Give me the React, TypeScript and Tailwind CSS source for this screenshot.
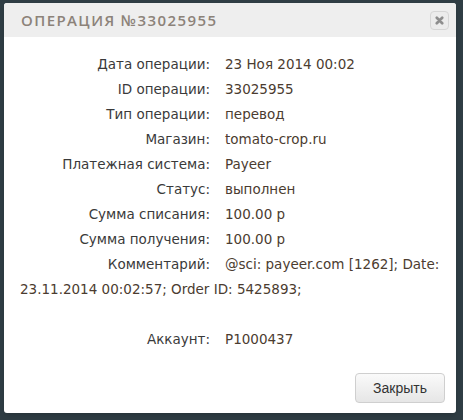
import React from "react";

const rows: [string, string][] = [
  ["Дата операции:", "23 Ноя 2014 00:02"],
  ["ID операции:", "33025955"],
  ["Тип операции:", "перевод"],
  ["Магазин:", "tomato-crop.ru"],
  ["Платежная система:", "Payeer"],
  ["Статус:", "выполнен"],
  ["Сумма списания:", "100.00 р"],
  ["Сумма получения:", "100.00 р"],
];

export default function App() {
  return (
    <div className="w-[463px] h-[420px] bg-[#2f3d44] pt-[3px] pl-[4px]">
      <div className="w-[452px] h-[410px] bg-white rounded-[3px] shadow-md flex flex-col overflow-hidden">
        {/* header */}
        <div className="h-[34px] bg-[#eeeeee] flex items-center justify-between pl-[17px] pr-[7px]">
          <div className="font-['Open_Sans',sans-serif] font-semibold text-[15px] tracking-[1.4px] text-[#8c8279]">
            ОПЕРАЦИЯ №33025955
          </div>
          <button className="w-[19px] h-[19px] rounded-[4px] border border-[#d6d6d6] bg-[#ececec] flex items-center justify-center">
            <svg width="9" height="9" viewBox="0 0 10 10">
              <path d="M2 2 L8 8 M8 2 L2 8" stroke="#8e8e8e" strokeWidth="3" strokeLinecap="round" />
            </svg>
          </button>
        </div>

        {/* body */}
        <div className="flex-1 pt-[15px] pl-[16px] pr-[14px] font-['DejaVu_Sans',sans-serif] text-[13.5px] leading-[25px] text-[#3a3a3a]">
          {rows.map(([k, v]) => (
            <div key={k}>
              <span className="inline-block w-[190px] text-right mr-[15px]">{k}</span>
              <span className="text-[#4b3c30]">{v}</span>
            </div>
          ))}
          <div>
            <span className="inline-block w-[190px] text-right mr-[15px]">Комментарий:</span>
            <span className="text-[#4b3c30]">
              @sci: payeer.com [1262]; Date: 23.11.2014 00:02:57; Order ID: 5425893;
            </span>
          </div>
          <div className="h-[25px]" />
          <div>
            <span className="inline-block w-[190px] text-right mr-[15px]">Аккаунт:</span>
            <span className="text-[#4b3c30]">P1000437</span>
          </div>
        </div>

        {/* footer */}
        <div className="flex justify-end pr-[11px] pb-[10px]">
          <button className="w-[90px] h-[30px] rounded-[4px] border border-[#cfcfcf] bg-gradient-to-b from-[#fafafa] to-[#e6e6e6] font-['Liberation_Sans',sans-serif] text-[14px] text-[#333]">
            Закрыть
          </button>
        </div>
      </div>
    </div>
  );
}
